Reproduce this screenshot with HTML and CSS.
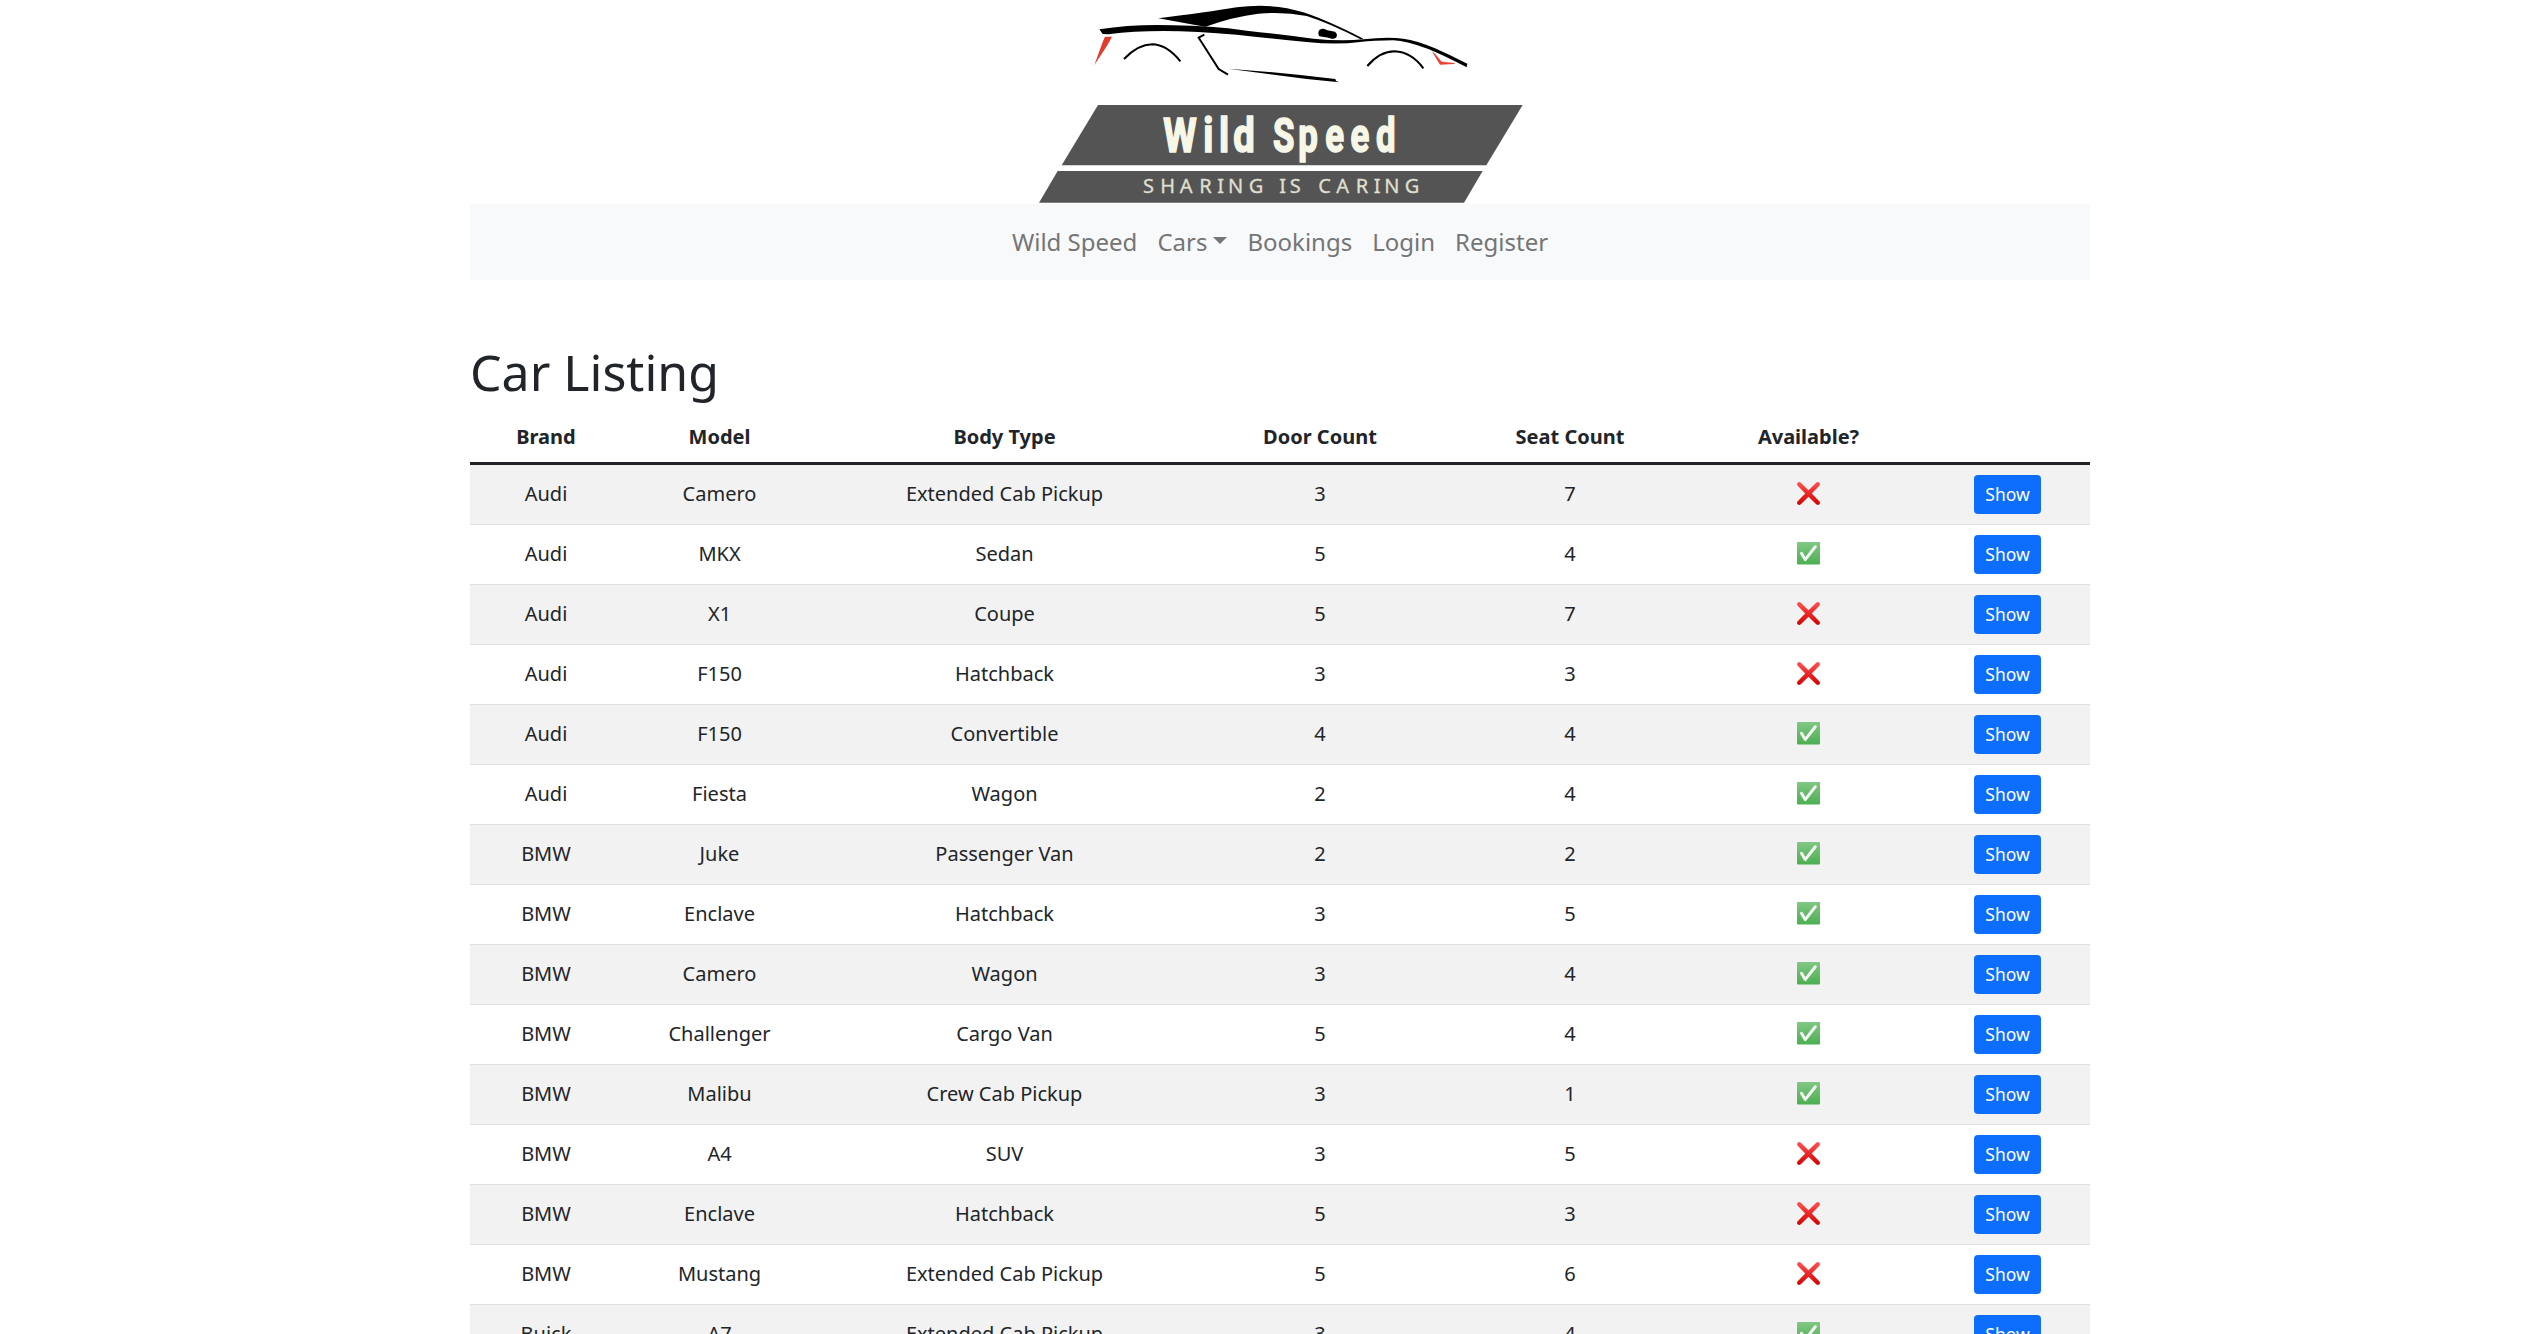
FILE: index.html
```html
<!DOCTYPE html>
<html lang="en">
<head>
<meta charset="utf-8">
<title>Wild Speed</title>
<link rel="stylesheet" href="styles.css">
</head>
<body>
<svg width="0" height="0" class="defs">
  <defs>
    <linearGradient id="red" x1="0" y1="0" x2="0" y2="1"><stop offset="0" stop-color="#ff5252"/><stop offset="1" stop-color="#d50000"/></linearGradient>
    <linearGradient id="green" x1="0" y1="0" x2="0" y2="1"><stop offset="0" stop-color="#81c784"/><stop offset="1" stop-color="#4caf50"/></linearGradient>
    <symbol id="no" viewBox="0 0 23 23"><path fill="url(#red)" d="M.7.7Q2-.6 3.8.7L11.500 8.200 19.200.7Q21-.6 22.300.7 23.600 2 22.300 3.800L14.800 11.500 22.300 19.200Q23.600 21 22.300 22.300 21 23.600 19.200 22.300L11.500 14.800 3.800 22.300Q2 23.600.7 22.300-.6 21 .7 19.200L8.200 11.500.7 3.800Q-.6 2 .7.7Z"/></symbol>
    <symbol id="yes" viewBox="0 0 23 23"><rect width="23" height="22.500" rx="1" fill="url(#green)"/><path d="M4.500 11.300 8.200 17.600 18.300 4.800" fill="none" stroke="#f4f4f4" stroke-width="3" stroke-linecap="round" stroke-linejoin="round"/></symbol>
  </defs>
</svg>
<div class="container">
  <header class="brand">
    <svg class="logo" viewBox="0 0 1560 612" role="img" aria-label="Wild Speed">
      <path d="M415 55Q560 37 650 22Q760 8 850 37Q920 60 1030 116L1022 118Q930 70 860 48Q790 34 715 41Q640 50 556 80L530 76Z"/>
      <path d="M238 88Q340 72 460 76Q570 77 680 92Q790 104 880 116Q960 124 1030 118Q1100 110 1150 116Q1190 121 1245 145Q1290 165 1342 191L1340 202Q1280 170 1225 147Q1160 123 1120 121Q1060 121 1020 126Q950 135 860 126Q760 116 650 104Q530 94 430 93Q340 93 265 103L248 102Z"/>
      <path d="M312 177Q355 133 396 133Q441 134 481 184M1042 198Q1080 154 1124 154Q1174 156 1210 205" fill="none" stroke="#000" stroke-width="6"/>
      <path d="M553 104 536 113 596 207 624 224" fill="none" stroke="#000" stroke-width="6"/>
      <path d="M625 206Q780 217 946 237L948 243 958 247 860 237Z"/>
      <path d="M908 98 938 106" stroke="#000" stroke-width="18" stroke-linecap="round"/>
      <path d="M898 90Q910 82 922 91L945 95Q955 103 948 113Q938 119 926 113L898 109Q892 99 898 90Z"/>
      <path fill="#e23a2c" d="M255 110H276L262 136 223 195 249 124Z"/>
      <path fill="#f04034" d="M1235 153 1245 161 1265 185 1305 189 1302 192 1260 194Z"/>
      <path class="plate" d="M234 315H1508L1399 496H125Z"/>
      <path class="plate" d="M113 513H1388L1332 608H57Z"/>
      <text class="logo-name" transform="translate(430 455) scale(.79 1)" x="0 152 211 266" y="0">Wild</text>
      <text class="logo-name" transform="translate(760 455) scale(.72 1)" x="-1 104 216 322 428" y="0">Speed</text>
      <text class="logo-tag" x="369 421 479 538 592 624 686 751 778 809 859 895 949 1007 1061 1093 1154" y="578">SHARING IS CARING</text>
    </svg>
  </header>
  <nav class="navbar">
    <a>Wild Speed</a><a class="toggle">Cars</a><a>Bookings</a><a>Login</a><a>Register</a>
  </nav>
  <h1>Car Listing</h1>
  <table>
    <colgroup><col class="c-brand"><col class="c-model"><col class="c-body"><col class="c-door"><col class="c-seat"><col class="c-avail"><col class="c-show"></colgroup>
    <thead><tr><th>Brand</th><th>Model</th><th>Body Type</th><th>Door Count</th><th>Seat Count</th><th>Available?</th><th></th></tr></thead>
    <tbody>
      <tr><td>Audi</td><td>Camero</td><td>Extended Cab Pickup</td><td>3</td><td>7</td><td><svg class="mark"><use href="#no"/></svg></td><td><a class="btn">Show</a></td></tr>
      <tr><td>Audi</td><td>MKX</td><td>Sedan</td><td>5</td><td>4</td><td><svg class="mark"><use href="#yes"/></svg></td><td><a class="btn">Show</a></td></tr>
      <tr><td>Audi</td><td>X1</td><td>Coupe</td><td>5</td><td>7</td><td><svg class="mark"><use href="#no"/></svg></td><td><a class="btn">Show</a></td></tr>
      <tr><td>Audi</td><td>F150</td><td>Hatchback</td><td>3</td><td>3</td><td><svg class="mark"><use href="#no"/></svg></td><td><a class="btn">Show</a></td></tr>
      <tr><td>Audi</td><td>F150</td><td>Convertible</td><td>4</td><td>4</td><td><svg class="mark"><use href="#yes"/></svg></td><td><a class="btn">Show</a></td></tr>
      <tr><td>Audi</td><td>Fiesta</td><td>Wagon</td><td>2</td><td>4</td><td><svg class="mark"><use href="#yes"/></svg></td><td><a class="btn">Show</a></td></tr>
      <tr><td>BMW</td><td>Juke</td><td>Passenger Van</td><td>2</td><td>2</td><td><svg class="mark"><use href="#yes"/></svg></td><td><a class="btn">Show</a></td></tr>
      <tr><td>BMW</td><td>Enclave</td><td>Hatchback</td><td>3</td><td>5</td><td><svg class="mark"><use href="#yes"/></svg></td><td><a class="btn">Show</a></td></tr>
      <tr><td>BMW</td><td>Camero</td><td>Wagon</td><td>3</td><td>4</td><td><svg class="mark"><use href="#yes"/></svg></td><td><a class="btn">Show</a></td></tr>
      <tr><td>BMW</td><td>Challenger</td><td>Cargo Van</td><td>5</td><td>4</td><td><svg class="mark"><use href="#yes"/></svg></td><td><a class="btn">Show</a></td></tr>
      <tr><td>BMW</td><td>Malibu</td><td>Crew Cab Pickup</td><td>3</td><td>1</td><td><svg class="mark"><use href="#yes"/></svg></td><td><a class="btn">Show</a></td></tr>
      <tr><td>BMW</td><td>A4</td><td>SUV</td><td>3</td><td>5</td><td><svg class="mark"><use href="#no"/></svg></td><td><a class="btn">Show</a></td></tr>
      <tr><td>BMW</td><td>Enclave</td><td>Hatchback</td><td>5</td><td>3</td><td><svg class="mark"><use href="#no"/></svg></td><td><a class="btn">Show</a></td></tr>
      <tr><td>BMW</td><td>Mustang</td><td>Extended Cab Pickup</td><td>5</td><td>6</td><td><svg class="mark"><use href="#no"/></svg></td><td><a class="btn">Show</a></td></tr>
      <tr><td>Buick</td><td>A7</td><td>Extended Cab Pickup</td><td>3</td><td>4</td><td><svg class="mark"><use href="#yes"/></svg></td><td><a class="btn">Show</a></td></tr>
    </tbody>
  </table>
</div>
</body>
</html>
```
FILE: styles.css
```css
* { box-sizing: border-box; }
html { height: 100%; overflow: hidden; }
body {
  margin: 0;
  height: 100%;
  overflow: hidden;
  background: #fff;
  color: #212529;
  font: 20px/1.5 "Noto Sans", sans-serif;
}
.defs { display: block; }
.container { width: 1620px; margin-left: 470px; }
.brand { display: flex; justify-content: center; height: 204px; }
.logo { width: 520px; height: 204px; }
.plate { fill: #545454; }
.logo-name { font: 700 145px Roboto, sans-serif; fill: #f7f7e8; stroke: #f7f7e8; stroke-width: 5px; }
.logo-tag { font: 400 60px "Noto Sans", sans-serif; fill: #dfdfcf; stroke: #dfdfcf; stroke-width: 1px; }
.navbar {
  display: flex;
  justify-content: center;
  align-items: center;
  gap: 20px;
  height: 76px;
  background: #f8f9fa;
  color: #747576;
  font-size: 24px;
}
.toggle { display: flex; align-items: center; }
.toggle::after {
  content: "";
  margin: -4px 0 0 6px;
  border-top: 7px solid;
  border-left: 7px solid transparent;
  border-right: 7px solid transparent;
}
h1 { margin: 62px 0 10px; font-size: 50px; font-weight: 400; line-height: 60px; }
table { width: 1620px; table-layout: fixed; border-collapse: separate; border-spacing: 0; text-align: center; }
.c-brand { width: 152px; }
.c-model { width: 195px; }
.c-body { width: 375px; }
.c-door { width: 256px; }
.c-seat { width: 244px; }
.c-avail { width: 233px; }
.c-show { width: 165px; }
th { height: 53px; padding: 0; border-bottom: 3px solid #212529; font-weight: 700; }
td { height: 60px; padding: 0 0 2px; border-bottom: 1px solid #dee2e6; vertical-align: middle; }
tbody tr:nth-child(odd) { background: #f2f2f2; }
.mark { display: block; width: 23px; height: 23px; margin: 0 auto; }
.btn {
  display: block;
  width: 67px;
  height: 39px;
  margin: 2px auto 0;
  border-radius: 4px;
  background: #0d6efd;
  color: #fff;
  font-size: 17.5px;
  line-height: 39px;
}
```
